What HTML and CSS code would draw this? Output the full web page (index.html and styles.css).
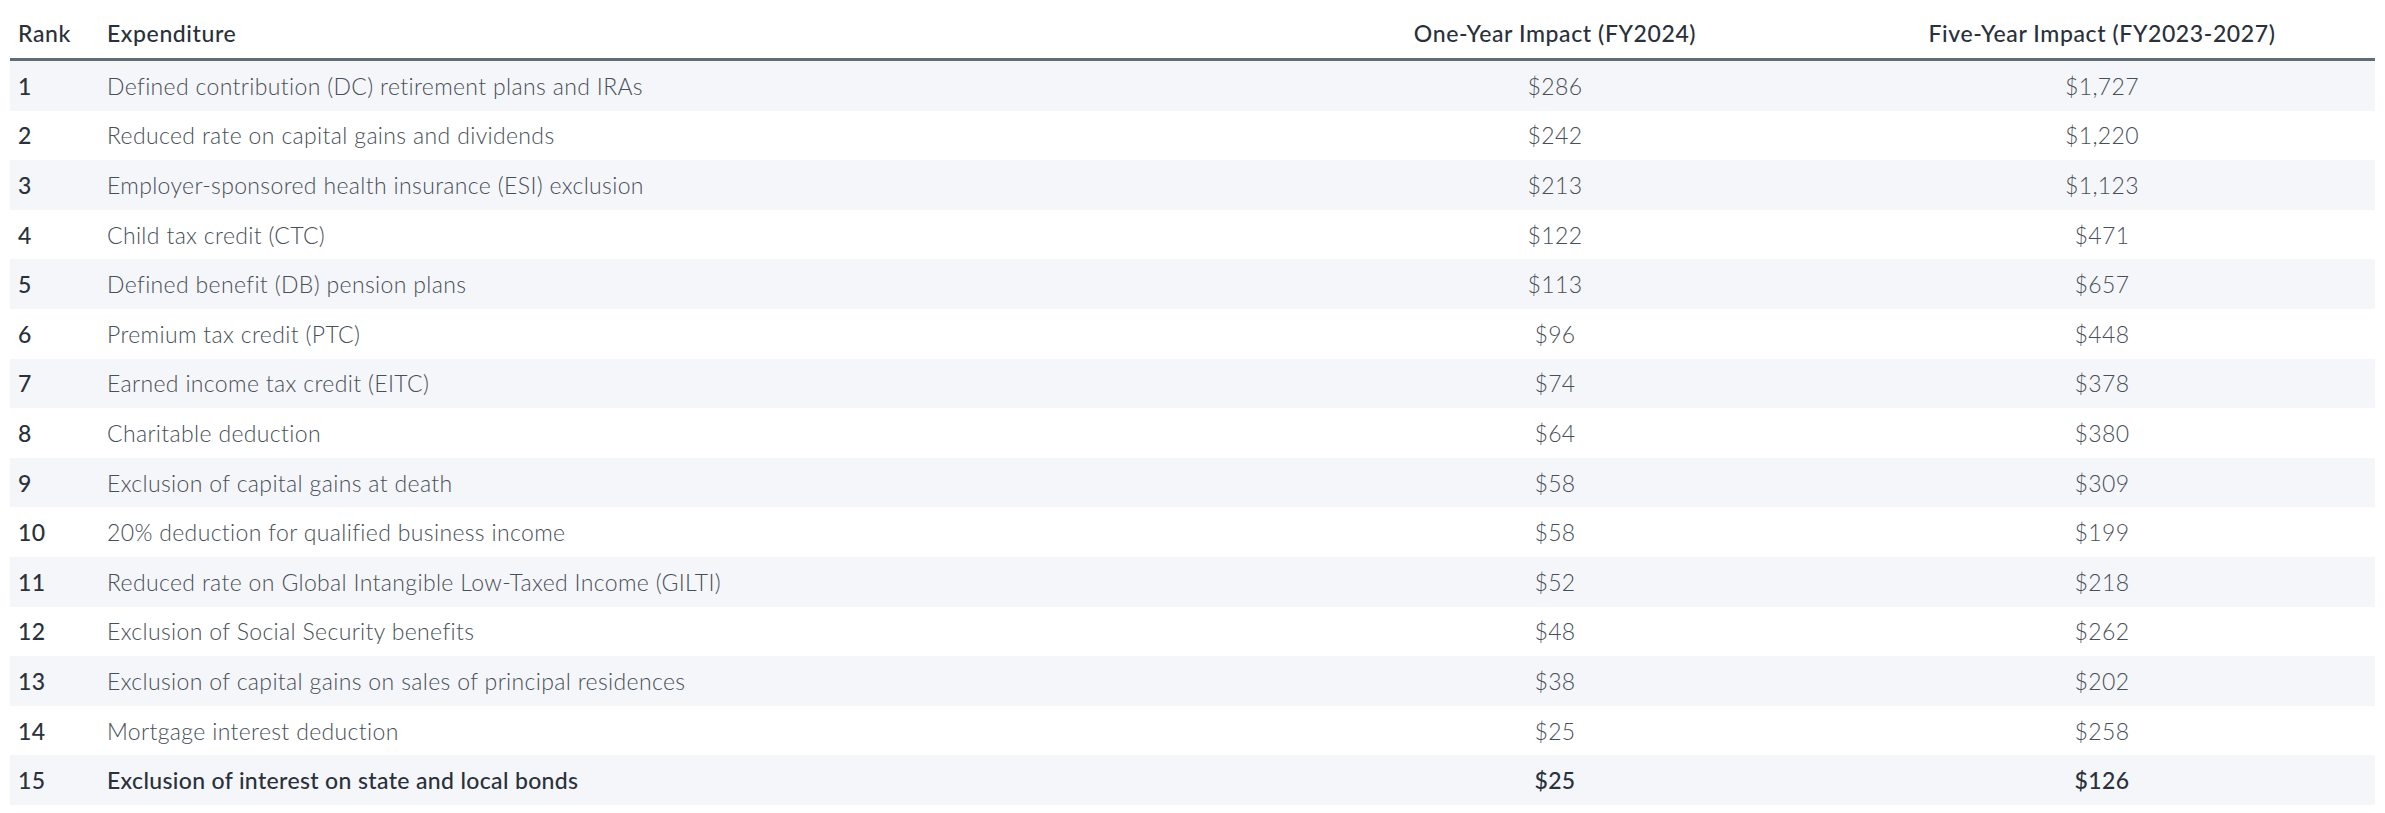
FILE: index.html
```html
<!DOCTYPE html>
<html lang="en">
<head>
<meta charset="utf-8">
<title>Top Tax Expenditures</title>
<link rel="stylesheet" href="styles.css">
</head>
<body>
<div class="wrap">
<table class="tbl">
  <colgroup>
    <col class="c-rank">
    <col class="c-exp">
    <col class="c-one">
    <col class="c-five">
  </colgroup>
  <thead>
    <tr>
      <th class="rank">Rank</th>
      <th class="exp">Expenditure</th>
      <th class="num">One-Year Impact (FY2024)</th>
      <th class="num">Five-Year Impact (FY2023-2027)</th>
    </tr>
  </thead>
  <tbody>
    <tr><td class="rank">1</td><td class="exp">Defined contribution (DC) retirement plans and IRAs</td><td class="num">$286</td><td class="num">$1,727</td></tr>
    <tr><td class="rank">2</td><td class="exp">Reduced rate on capital gains and dividends</td><td class="num">$242</td><td class="num">$1,220</td></tr>
    <tr><td class="rank">3</td><td class="exp">Employer-sponsored health insurance (ESI) exclusion</td><td class="num">$213</td><td class="num">$1,123</td></tr>
    <tr><td class="rank">4</td><td class="exp">Child tax credit (CTC)</td><td class="num">$122</td><td class="num">$471</td></tr>
    <tr><td class="rank">5</td><td class="exp">Defined benefit (DB) pension plans</td><td class="num">$113</td><td class="num">$657</td></tr>
    <tr><td class="rank">6</td><td class="exp">Premium tax credit (PTC)</td><td class="num">$96</td><td class="num">$448</td></tr>
    <tr><td class="rank">7</td><td class="exp">Earned income tax credit (EITC)</td><td class="num">$74</td><td class="num">$378</td></tr>
    <tr><td class="rank">8</td><td class="exp">Charitable deduction</td><td class="num">$64</td><td class="num">$380</td></tr>
    <tr><td class="rank">9</td><td class="exp">Exclusion of capital gains at death</td><td class="num">$58</td><td class="num">$309</td></tr>
    <tr><td class="rank">10</td><td class="exp">20% deduction for qualified business income</td><td class="num">$58</td><td class="num">$199</td></tr>
    <tr><td class="rank">11</td><td class="exp">Reduced rate on Global Intangible Low-Taxed Income (GILTI)</td><td class="num">$52</td><td class="num">$218</td></tr>
    <tr><td class="rank">12</td><td class="exp">Exclusion of Social Security benefits</td><td class="num">$48</td><td class="num">$262</td></tr>
    <tr><td class="rank">13</td><td class="exp">Exclusion of capital gains on sales of principal residences</td><td class="num">$38</td><td class="num">$202</td></tr>
    <tr><td class="rank">14</td><td class="exp">Mortgage interest deduction</td><td class="num">$25</td><td class="num">$258</td></tr>
    <tr class="strong"><td class="rank">15</td><td class="exp">Exclusion of interest on state and local bonds</td><td class="num">$25</td><td class="num">$126</td></tr>
  </tbody>
</table>
</div>
</body>
</html>
```

FILE: styles.css
```css
html, body {
  margin: 0;
  padding: 0;
  background: #ffffff;
}

.wrap {
  padding: 8px 10px;
}

.tbl {
  width: 100%;
  border-collapse: collapse;
  table-layout: fixed;
  font-family: Lato, "Liberation Sans", sans-serif;
}

.c-rank { width: 89px; }
.c-one { width: 548px; }
.c-five { width: 546px; }

.tbl th {
  height: 50px;
  padding: 0 8px;
  font-size: 23px;
  font-weight: 500;
  letter-spacing: 0.6px;
  color: #29313a;
  text-align: left;
  border-bottom: 3px solid #5f6d77;
  vertical-align: middle;
}

.tbl th.num,
.tbl td.num {
  text-align: center;
}

.tbl td {
  height: 49.6px;
  padding: 0 8px;
  font-size: 23px;
  font-weight: 300;
  letter-spacing: 0.35px;
  color: #474f58;
  vertical-align: middle;
}

.tbl td.rank {
  font-weight: 500;
  color: #29313a;
}

.tbl tbody tr:nth-child(odd) {
  background: #f5f6fa;
}

.tbl tr.strong td {
  font-weight: 500;
  color: #29313a;
}
```
